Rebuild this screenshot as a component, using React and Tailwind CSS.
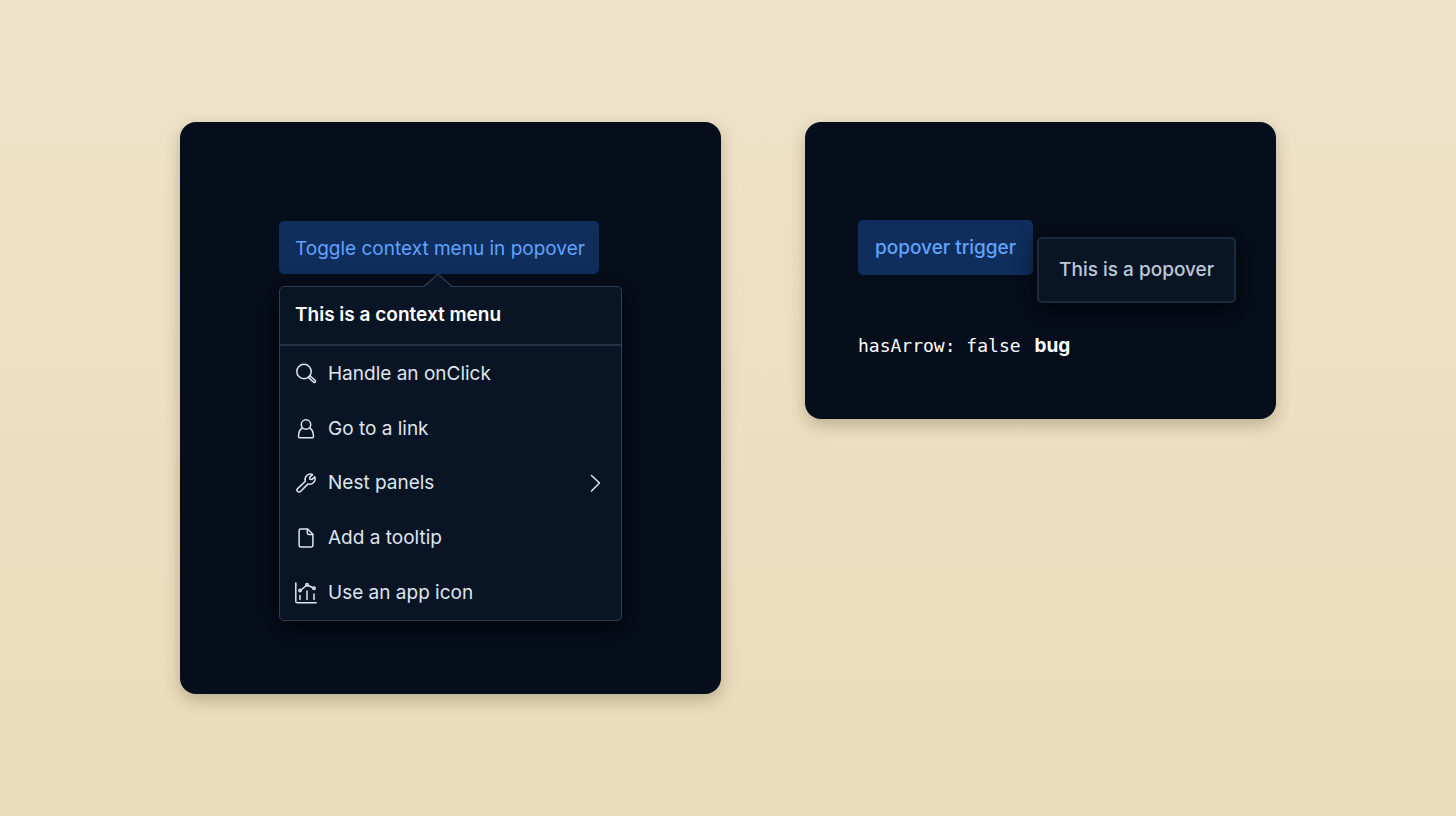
// src/App.jsx
const iconProps = {
  width: 22,
  height: 22,
  viewBox: "0 0 22 22",
  fill: "none",
  stroke: "currentColor",
  strokeWidth: "1.5",
  strokeLinecap: "round",
  strokeLinejoin: "round",
  "aria-hidden": true,
};

function SearchIcon() {
  return (
    <svg {...iconProps}>
      <circle cx="9" cy="8.5" r="7.2" />
      <path d="M13.4 14.4l1.6-1.6 5 4.6c.6.6.6 1.2.1 1.7s-1.2.5-1.800-.1z" />
    </svg>
  );
}

function UserIcon() {
  return (
    <svg {...iconProps}>
      <circle cx="11" cy="6.5" r="4.7" />
      <path d="M7.300 10C4.700 11.400 3.600 14.500 3.500 18.500c0 .8.500 1.300 1.200 1.300h12.600c.7 0 1.200-.5 1.200-1.300-.1-4-1.200-7.100-3.800-8.500" />
    </svg>
  );
}

function WrenchIcon() {
  return (
    <svg {...iconProps}>
      <path d="M17.6 2.6a5.400 5.400 0 0 0-7.300 6.600l-7.700 7.400a2 2 0 0 0 2.900 2.900l7.500-7.600a5.400 5.400 0 0 0 6.700-7.100l-2.800 2.800-2-.3-.3-1.900z" />
    </svg>
  );
}

function DocumentIcon() {
  return (
    <svg {...iconProps}>
      <path d="M12.6 2H5.500c-.8 0-1.400.6-1.400 1.400v15.200c0 .8.6 1.400 1.400 1.400h11c.8 0 1.400-.6 1.400-1.400V7.200z" />
      <path d="M12.3 2.200v3.900c0 .8.6 1.400 1.400 1.400h4" />
    </svg>
  );
}

function ChartIcon() {
  return (
    <svg {...iconProps}>
      <path d="M.8 1v18.200c0 1 .6 1.600 1.600 1.600h18.800" />
      <path d="M6 8l5-4.300M13 3.500l5 2.200" />
      <circle cx="5" cy="8.5" r="1.200" />
      <circle cx="12" cy="2.800" r="1.200" />
      <circle cx="19" cy="6.200" r="1.200" />
      <path d="M5 13.500v4M12 9v8.500M19 12v5.500" />
    </svg>
  );
}

function ChevronIcon() {
  return (
    <svg {...iconProps}>
      <path d="M7.500 3.500l8 7.500-8 8" />
    </svg>
  );
}

const menuItems = [
  { label: "Handle an onClick", Icon: SearchIcon },
  { label: "Go to a link", Icon: UserIcon, href: "#link" },
  { label: "Nest panels", Icon: WrenchIcon, nested: true },
  { label: "Add a tooltip", Icon: DocumentIcon },
  { label: "Use an app icon", Icon: ChartIcon },
];

function MenuItem({ item }) {
  const { label, Icon, href, nested } = item;
  const Tag = href ? "a" : "button";

  return (
    <li className="flex">
      <Tag
        href={href}
        type={href ? undefined : "button"}
        className="flex w-full items-center gap-[11px] px-[15px] text-left text-[#dfe5ef] hover:underline"
      >
        <Icon />
        <span className="grow">{label}</span>
        {nested && <ChevronIcon />}
      </Tag>
    </li>
  );
}

function ContextMenu() {
  return (
    <div className="relative mt-3 rounded-[5px] border border-[#2f3e55] bg-[#091525] shadow-[0_6px_20px_2px_rgba(0,0,0,0.6)]">
      {/* arrow */}
      <svg
        className="absolute -top-[14px] left-[143px]"
        width="30"
        height="15"
        viewBox="0 0 30 15"
        aria-hidden="true"
      >
        <path d="M1 15v-1L15 1l14 13v1z" fill="#091525" />
        <path d="M1 13.500L15 1l14 12.500" fill="none" stroke="#2f3e55" strokeWidth="1.300" />
      </svg>

      <h2 className="border-b-2 border-[#243247] px-[15px] pt-[14px] pb-[15px] font-semibold text-white">
        This is a context menu
      </h2>
      <ul className="grid min-h-[274px] auto-rows-fr pt-px">
        {menuItems.map((item) => (
          <MenuItem key={item.label} item={item} />
        ))}
      </ul>
    </div>
  );
}

export default function App() {
  return (
    <main className="grid min-h-screen grid-cols-[541fr_471fr] items-start gap-[84px] bg-linear-to-b from-[#efe3ca] to-[#eadbba] px-[180px] py-[122px] font-['Inter',sans-serif] text-[19px] leading-7">
      <section className="rounded-2xl bg-[#060d1b] px-[99px] pt-[99px] pb-[73px] shadow-[0_6px_16px_rgba(60,50,20,0.28)]">
        <button
          type="button"
          className="block rounded-[5px] bg-[#0f2e5c] pt-[14px] pr-[14px] pb-[11px] pl-4 whitespace-nowrap text-[#61a2ff]"
        >
          Toggle context menu in popover
        </button>
        <ContextMenu />
      </section>

      <section className="rounded-2xl bg-[#060d1b] px-[53px] pt-[98px] pb-[59px] shadow-[0_6px_16px_rgba(60,50,20,0.28)]">
        <div className="relative w-fit font-medium">
          <button
            type="button"
            className="block rounded-[5px] bg-[#0f2e5c] px-[17px] pt-[14px] pb-[13px] whitespace-nowrap text-[#61a2ff]"
          >
            popover trigger
          </button>
          <div
            role="dialog"
            aria-label="popover"
            className="absolute top-[17px] left-full ml-1 rounded-[5px] border-2 border-[#1d2a3e] bg-[#091525] px-5 py-[17px] whitespace-nowrap text-[#bcc8d9] shadow-[0_6px_20px_2px_rgba(0,0,0,0.6)]"
          >
            This is a popover
          </div>
        </div>
        <p className="mt-[57px] flex gap-[14px] text-white">
          <code className="font-['DejaVu_Sans_Mono',monospace] text-[18px]">hasArrow: false</code>
          <strong className="font-bold">bug</strong>
        </p>
      </section>
    </main>
  );
}
